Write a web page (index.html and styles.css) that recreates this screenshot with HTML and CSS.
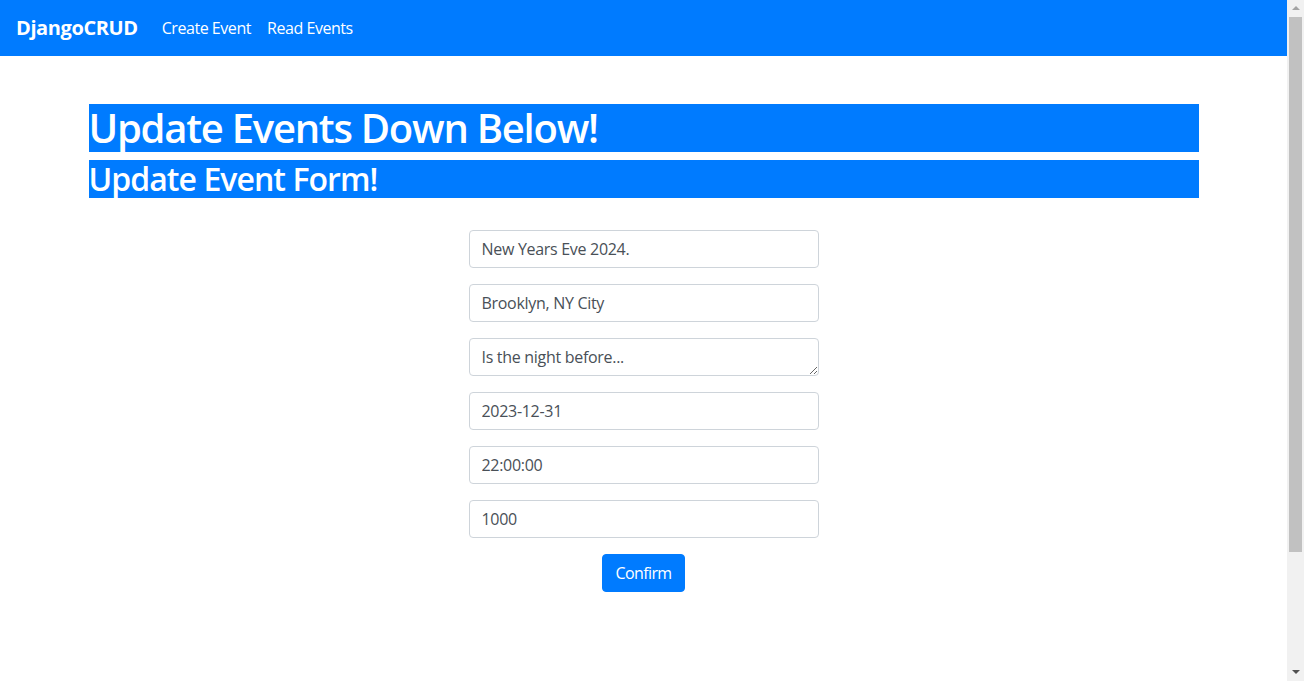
FILE: index.html
```html
<!DOCTYPE html>
<html lang="en">
<head>
<meta charset="utf-8">
<title>DjangoCRUD</title>
<link rel="stylesheet" href="styles.css">
</head>
<body>
<nav class="navbar">
  <a class="brand" href="#">DjangoCRUD</a>
  <ul class="nav">
    <li><a class="nav-link" href="#">Create Event</a></li>
    <li><a class="nav-link" href="#">Read Events</a></li>
  </ul>
</nav>
<main class="container">
  <h1 class="title">Update Events Down Below!</h1>
  <h2 class="subtitle">Update Event Form!</h2>
  <form class="event-form">
    <div class="form-group"><input class="form-control" type="text" value="New Years Eve 2024."></div>
    <div class="form-group"><input class="form-control" type="text" value="Brooklyn, NY City"></div>
    <div class="form-group"><textarea class="form-control textarea" rows="1">Is the night before...</textarea></div>
    <div class="form-group"><input class="form-control" type="text" value="2023-12-31"></div>
    <div class="form-group"><input class="form-control" type="text" value="22:00:00"></div>
    <div class="form-group"><input class="form-control" type="text" value="1000"></div>
    <div class="actions"><button class="btn" type="button">Confirm</button></div>
  </form>
</main>
<div class="scrollbar" aria-hidden="true">
  <div class="arrow arrow-up"></div>
  <div class="thumb"></div>
  <div class="arrow arrow-down"></div>
</div>
</body>
</html>
```
FILE: styles.css
```css
html {
  overflow: hidden;
}
body {
  margin: 0;
  padding-right: 17px;
  font-family: "Open Sans", "Noto Sans", sans-serif;
  font-size: 16px;
  line-height: 1.5;
  color: #212529;
  background: #fff;
}
.navbar {
  display: flex;
  align-items: center;
  height: 56px;
  box-sizing: border-box;
  padding: 8px 16px;
  background: #007bff;
}
.brand {
  font-size: 20px;
  font-weight: 700;
  line-height: 30px;
  color: #fff;
  text-decoration: none;
  margin-right: 16px;
  letter-spacing: -0.4px;
}
.nav {
  display: flex;
  list-style: none;
  margin: 0;
  padding: 0;
}
.nav-link {
  display: block;
  padding: 8px 8px;
  color: #fff;
  text-decoration: none;
  letter-spacing: -0.45px;
}
.container {
  max-width: 1110px;
  margin: 48px auto 0;
  padding: 0 15px;
}
.title,
.subtitle {
  margin: 0 0 8px;
  background: #007bff;
  color: #fff;
  font-weight: 600;
  line-height: 1.2;
}
.title {
  font-size: 40px;
  letter-spacing: -1.25px;
}
.subtitle {
  font-size: 32px;
  letter-spacing: -0.95px;
}
.event-form {
  width: 350px;
  margin: 32px auto 0;
}
.form-group {
  margin-bottom: 16px;
}
.form-control {
  display: block;
  width: 100%;
  height: 38px;
  box-sizing: border-box;
  padding: 6px 12px;
  font-family: inherit;
  font-size: 16px;
  line-height: 1.5;
  color: #495057;
  background: #fff;
  border: 1px solid #ced4da;
  border-radius: 4px;
  margin: 0;
  letter-spacing: -0.3px;
}
.textarea {
  overflow: hidden;
  resize: vertical;
}
.actions {
  display: flex;
  justify-content: center;
}
.btn {
  font-family: inherit;
  font-size: 16px;
  line-height: 1.5;
  padding: 6px 12px;
  color: #fff;
  background: #007bff;
  border: 1px solid #007bff;
  border-radius: 4px;
  letter-spacing: -0.6px;
}
.scrollbar {
  position: fixed;
  top: 0;
  right: 0;
  width: 17px;
  height: 100%;
  background: #f1f1f1;
  display: flex;
  flex-direction: column;
  align-items: center;
}
.arrow {
  width: 0;
  height: 0;
  border-left: 4px solid transparent;
  border-right: 4px solid transparent;
}
.arrow-up {
  margin-top: 6px;
  border-bottom: 4px solid #a3a3a3;
}
.thumb {
  width: 13px;
  height: 535px;
  margin-top: 7px;
  background: #c1c1c1;
}
.arrow-down {
  margin-top: auto;
  margin-bottom: 7px;
  border-top: 4px solid #505050;
}
```
